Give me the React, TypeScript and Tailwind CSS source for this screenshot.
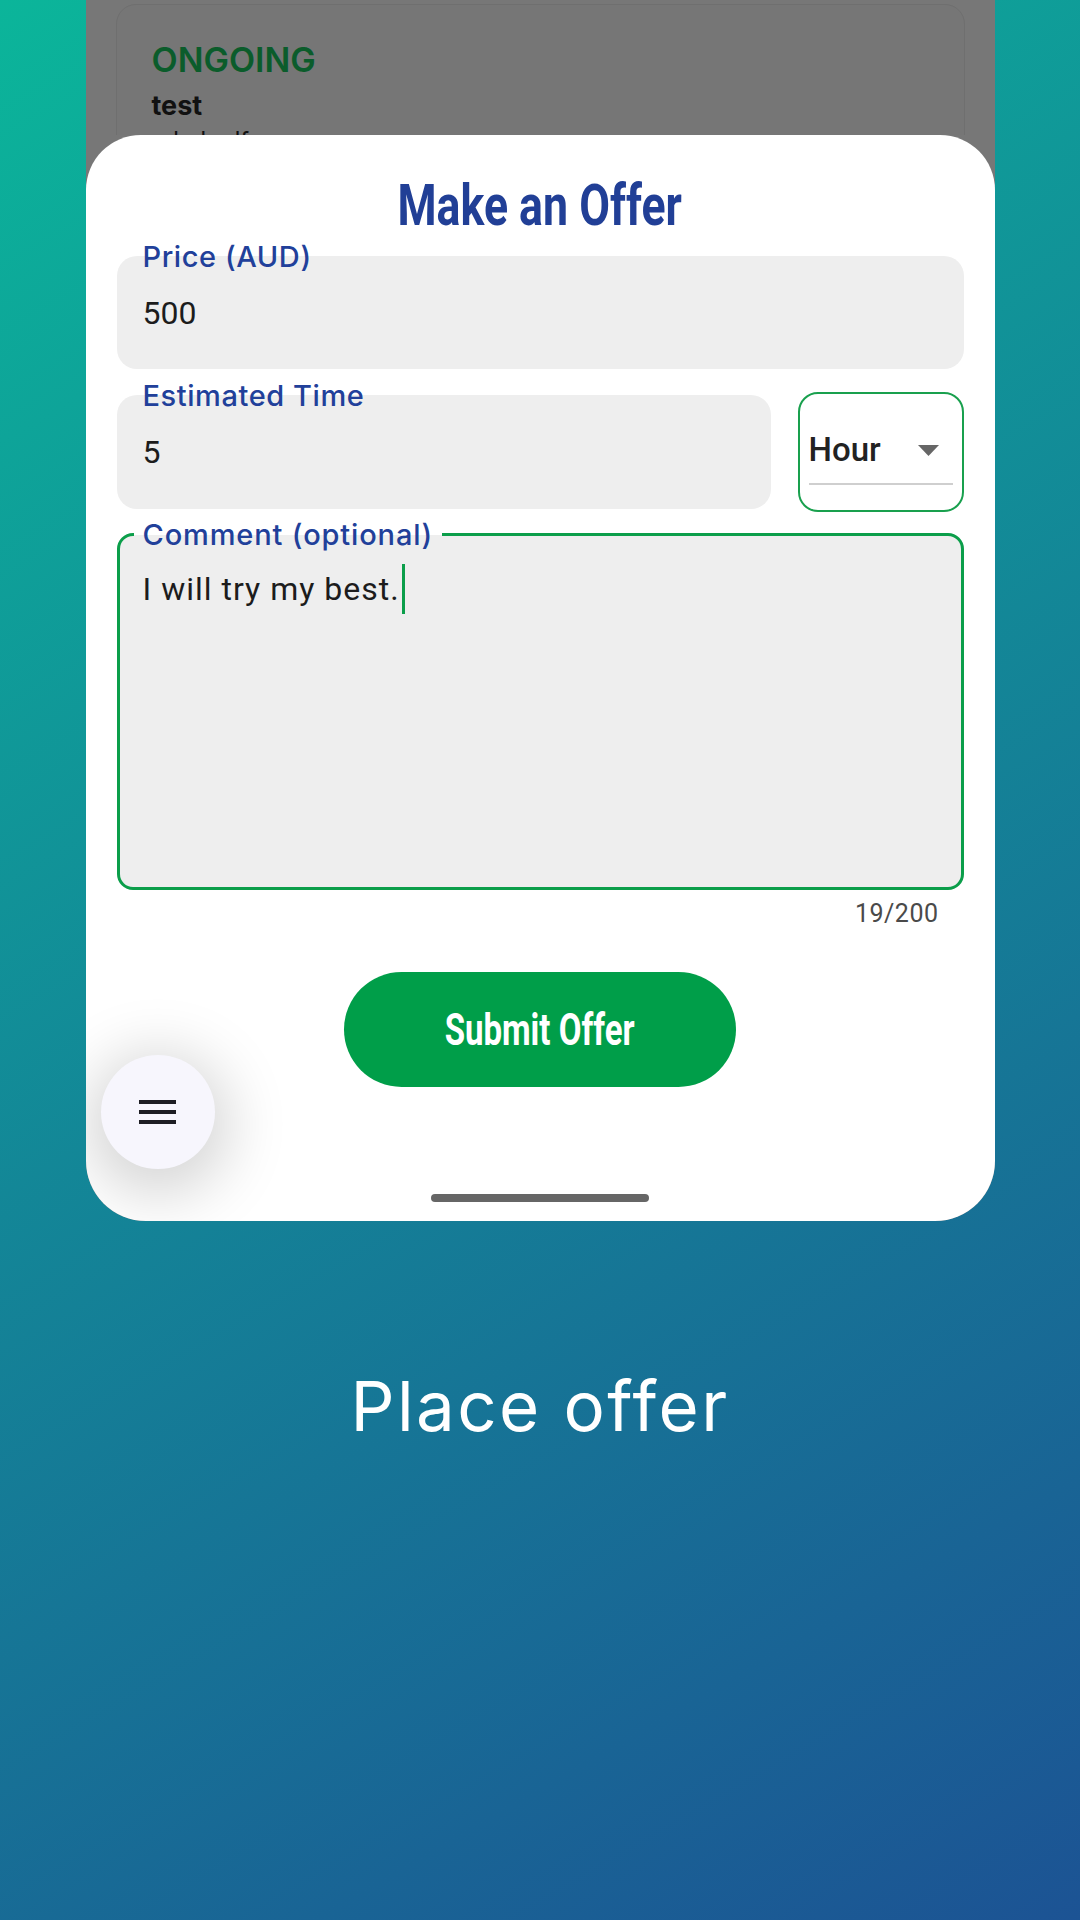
export default function App() {
  return (
    <div className="w-[1080px] h-[1920px] flex flex-col items-center bg-[linear-gradient(150deg,#0bb59a,#1c5394)]">
      {/* phone */}
      <div className="relative w-[909px] h-[1221px] overflow-hidden rounded-b-[60px] bg-[#777777] flex flex-col">
        <div className="h-[135px] shrink-0 px-[30px] pt-[4px] overflow-hidden">
          <div className="h-[200px] rounded-[20px] border border-[#6f6f6f] bg-[#767676] px-[35px] pt-[35px] font-['Inter']">
            <div className="text-[34px] leading-[40px] font-semibold text-[#0b5c2b]">ONGOING</div>
            <div className="mt-[8px] text-[27px] leading-[36px] font-bold text-[#111]">test</div>
            <div className="mt-[2px] text-[24px] leading-[30px] text-[#111]">sdsds dfs</div>
          </div>
        </div>

        {/* sheet */}
        <div className="flex-1 bg-white rounded-t-[55px] px-[31px] pt-[41px] flex flex-col">
          <h1 className="text-center">
            <span className="inline-block scale-x-[0.77] font-['Roboto'] font-bold text-[58px] leading-[58px] text-[#213f96]">
              Make an Offer
            </span>
          </h1>

          <div className="relative mt-[22px] h-[113px] rounded-[20px] bg-[#eeeeee] flex items-center px-[26px]">
            <span className="absolute left-[26px] -top-[14px] font-['Inter'] font-medium text-[29px] leading-[30px] tracking-[0.02em] text-[#21409a]">
              Price (AUD)
            </span>
            <span className="font-['Roboto'] text-[32px] leading-[40px] text-[#1c1c1c]">500</span>
          </div>

          <div className="mt-[23px] flex items-center gap-[27px]">
            <div className="relative flex-1 h-[114px] rounded-[20px] bg-[#eeeeee] flex items-center px-[26px]">
              <span className="absolute left-[26px] -top-[14px] font-['Inter'] font-medium text-[29px] leading-[30px] tracking-[0.02em] text-[#21409a]">
                Estimated Time
              </span>
              <span className="font-['Roboto'] text-[32px] leading-[40px] text-[#1c1c1c]">5</span>
            </div>
            <div className="w-[166px] h-[120px] rounded-[20px] border-2 border-[#19a04e] px-[9px] pt-[36px]">
              <div className="flex items-center justify-between h-[40px]">
                <span className="font-['Roboto'] font-medium text-[33px] leading-[40px] text-[#222222]">Hour</span>
                <svg width="21" height="11" viewBox="0 0 21 11" className="mr-[14px]">
                  <path d="M0 0h21L10.5 11z" fill="#666666" />
                </svg>
              </div>
              <div className="mt-[13px] h-[2px] bg-[#cfcfcf]" />
            </div>
          </div>

          <div className="relative mt-[21px] h-[357px] rounded-[16px] border-[3px] border-[#0b9e4a] bg-[#eeeeee] px-[23px] pt-[28px]">
            <span className="absolute left-[14px] -top-[16px] px-[9px] bg-[linear-gradient(to_bottom,#ffffff_50%,#eeeeee_50%)] font-['Inter'] font-medium text-[29px] leading-[30px] tracking-[0.03em] text-[#21409a]">
              Comment (optional)
            </span>
            <div className="flex items-center font-['Roboto'] text-[32px] leading-[40px] tracking-[1px] text-[#1c1c1c]">
              <span>I will try my best.</span>
              <span className="ml-[2px] w-[3px] h-[50px] bg-[#0b9e4a]" />
            </div>
          </div>

          <div className="mt-[9px] pr-[25px] text-right font-['Roboto'] text-[25px] leading-[30px] tracking-[0.5px] text-[#4a4a4a]">
            19/200
          </div>

          <button className="mt-[43px] self-center w-[392px] h-[115px] rounded-full bg-[#009e49] flex items-center justify-center">
            <span className="inline-block scale-x-[0.75] font-['Roboto'] font-bold text-[44px] leading-[50px] text-white">
              Submit Offer
            </span>
          </button>

          <div className="mt-[107px] self-center w-[218px] h-[8px] rounded-full bg-[#666666]" />
        </div>

        {/* floating menu button */}
        <div className="absolute left-[15px] top-[1055px] w-[114px] h-[114px] rounded-full bg-[#f7f6fd] shadow-[0_12px_60px_14px_rgba(0,0,0,0.17)] flex flex-col items-center justify-center gap-[6px]">
          <span className="w-[37px] h-[4px] bg-[#1e1e24]" />
          <span className="w-[37px] h-[4px] bg-[#1e1e24]" />
          <span className="w-[37px] h-[4px] bg-[#1e1e24]" />
        </div>
      </div>

      <div className="mt-[150px] font-['Inter'] text-[69px] leading-[70px] tracking-[0.035em] text-white">
        Place offer
      </div>
    </div>
  );
}
